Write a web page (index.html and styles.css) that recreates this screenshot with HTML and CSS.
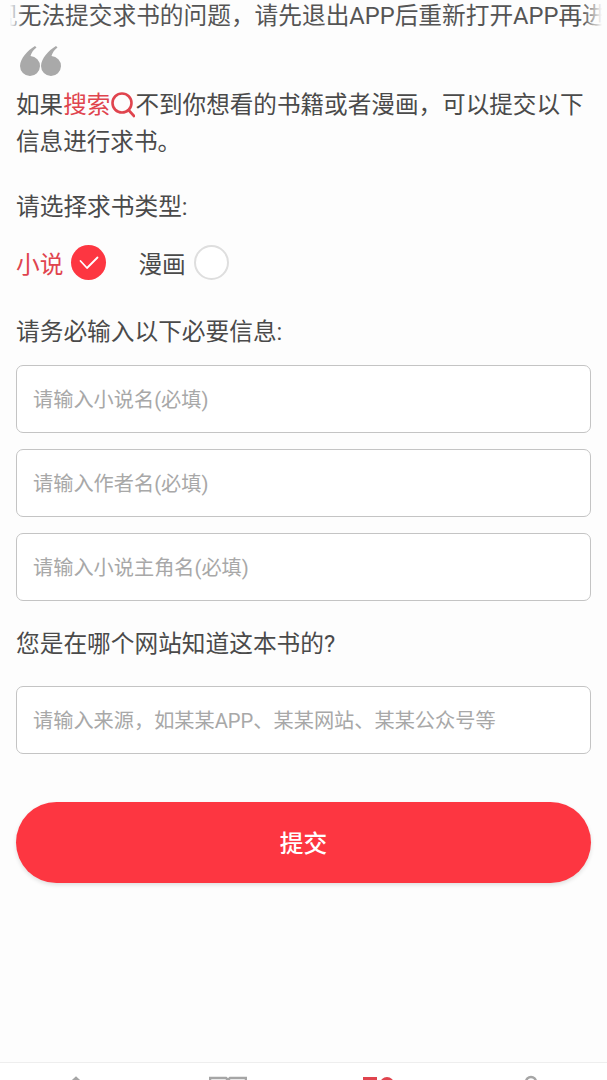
FILE: index.html
```html
<!DOCTYPE html>
<html lang="zh-CN">
<head>
    <meta charset="UTF-8">
    <meta name="viewport" content="width=device-width, initial-scale=1.0">
    <title>求书</title>
    <link rel="stylesheet" href="styles.css">
</head>
<body>

    <div class="notice">
        <div class="notice-text">现无法提交求书的问题，请先退出APP后重新打开APP再进行操作</div>
    </div>

    <main class="content">
        <svg class="quote" width="44" height="32" viewBox="0 0 44 32" aria-hidden="true">
            <path d="M15 1 C7 6 0.500 13 0 21 A10 10 0 1 0 10.500 11 C11.500 8 13 5 16.500 2.500 Z"/>
            <path d="M36 1 C28 6 21.500 13 21 21 A10 10 0 1 0 31.500 11 C32.500 8 34 5 37.500 2.500 Z"/>
        </svg>

        <p class="intro">如果<span class="red">搜索</span><svg class="search-icon" width="25" height="26" viewBox="0 0 25 26" aria-hidden="true"><circle cx="12" cy="11" r="9.500"/><path d="M18.500 18 L24 24"/></svg>不到你想看的书籍或者漫画，可以提交以下信息进行求书。</p>

        <p class="label">请选择求书类型:</p>

        <div class="types">
            <div class="type type-on">
                <span>小说</span>
                <span class="radio radio-on">
                    <svg width="20" height="14" viewBox="0 0 20 14" aria-hidden="true"><path d="M1.500 5 L8 12 L18.500 1.500"/></svg>
                </span>
            </div>
            <div class="type">
                <span>漫画</span>
                <span class="radio"></span>
            </div>
        </div>

        <p class="label label-info">请务必输入以下必要信息:</p>

        <div class="field">请输入小说名(必填)</div>
        <div class="field">请输入作者名(必填)</div>
        <div class="field">请输入小说主角名(必填)</div>

        <p class="label label-source">您是在哪个网站知道这本书的?</p>

        <div class="field">请输入来源，如某某APP、某某网站、某某公众号等</div>

        <button type="button" class="submit-button">提交</button>
    </main>

    <nav class="tabbar">
        <svg width="24" height="24" viewBox="0 0 24 24" aria-hidden="true"><path class="tab-line" d="M2 14 L12 5 L22 14"/></svg>
        <svg width="38" height="24" viewBox="0 0 38 24" aria-hidden="true"><path class="tab-line" d="M1 18 V5 H17 L19 7 L21 5 H37 V18"/></svg>
        <svg width="32" height="24" viewBox="0 0 32 24" aria-hidden="true"><rect class="tab-red" x="0" y="4" width="14" height="14"/><circle class="tab-red" cx="24" cy="11" r="7"/></svg>
        <svg width="24" height="24" viewBox="0 0 24 24" aria-hidden="true"><circle class="tab-line" cx="12" cy="9" r="5"/></svg>
    </nav>

</body>
</html>
```

FILE: styles.css
```css
html, body {
    height: 100%;
}

body {
    margin: 0;
    height: 1080px;
    overflow: hidden;
    position: relative;
    background-color: #fdfdfd;
    color: #4a4a4a;
    font-family: Roboto, 'Noto Sans CJK SC', sans-serif;
    font-size: 23.7px;
}

p {
    margin: 0;
}

.notice {
    height: 32px;
    overflow: hidden;
    position: relative;
    line-height: 32px;
    white-space: nowrap;
    color: #555;
}

.notice-text {
    margin-left: -6px;
}

/* Text fades out at both ends of the strip */
.notice::before, .notice::after {
    content: "";
    position: absolute;
    top: 0;
    bottom: 0;
    width: 24px;
}

.notice::before {
    left: 0;
    background: linear-gradient(to right, #fdfdfd 40%, rgba(253, 253, 253, 0));
}

.notice::after {
    right: 0;
    background: linear-gradient(to left, #fdfdfd 20%, rgba(253, 253, 253, 0));
}

.content {
    padding: 13px 16px 0;
    display: flex;
    flex-direction: column;
}

.quote {
    display: block;
    margin-left: 4px;
    fill: #a9a9a9;
}

.intro {
    margin-top: 10px;
    line-height: 37px;
    font-size: 23.6px;
}

.red {
    color: #e0444e;
}

.search-icon {
    vertical-align: -5px;
    fill: none;
    stroke: #e0444e;
    stroke-width: 2.600;
    stroke-linecap: round;
}

.label {
    line-height: 34px;
}

.intro + .label {
    margin-top: 29px;
}

.types {
    display: flex;
    gap: 32px;
    margin-top: 21px;
}

.type {
    display: flex;
    align-items: center;
    gap: 8px;
}

.type-on {
    color: #e0444e;
}

.radio {
    width: 35px;
    height: 35px;
    box-sizing: border-box;
    border: 2px solid #dedede;
    border-radius: 50%;
    background-color: #fff;
    display: flex;
    align-items: center;
    justify-content: center;
}

.radio-on {
    background-color: #fd3641;
    border: none;
}

.radio-on svg {
    fill: none;
    stroke: #fff;
    stroke-width: 1.800;
    stroke-linecap: round;
    stroke-linejoin: round;
}

.label-info {
    margin-top: 35px;
}

.field {
    height: 68px;
    box-sizing: border-box;
    margin-top: 16px;
    padding: 0 16px 2px;
    border: 1px solid #c4c4c4;
    border-radius: 7px;
    background-color: #fff;
    display: flex;
    align-items: center;
    color: #a8a8a8;
    font-size: 20.2px;
}

.label-source {
    margin-top: 26px;
}

.label-source + .field {
    margin-top: 25px;
}

.submit-button {
    height: 81px;
    margin-top: 48px;
    padding-bottom: 3px;
    border: none;
    border-radius: 41px;
    background-color: #fd3641;
    color: #fff;
    font-family: inherit;
    font-size: 23.7px;
    font-weight: 500;
    box-shadow: 0 2px 4px rgba(0, 0, 0, 0.12);
}

.tabbar {
    position: absolute;
    left: 0;
    right: 0;
    top: 1062px;
    height: 60px;
    border-top: 1px solid #eeeeee;
    background-color: #ffffff;
    display: grid;
    grid-template-columns: repeat(4, 1fr);
    justify-items: center;
    align-items: start;
    padding: 10px 0 0;
}

.tab-line {
    fill: none;
    stroke: #a6a6a6;
    stroke-width: 2.500;
}

.tab-red {
    fill: #e0444e;
}
```
